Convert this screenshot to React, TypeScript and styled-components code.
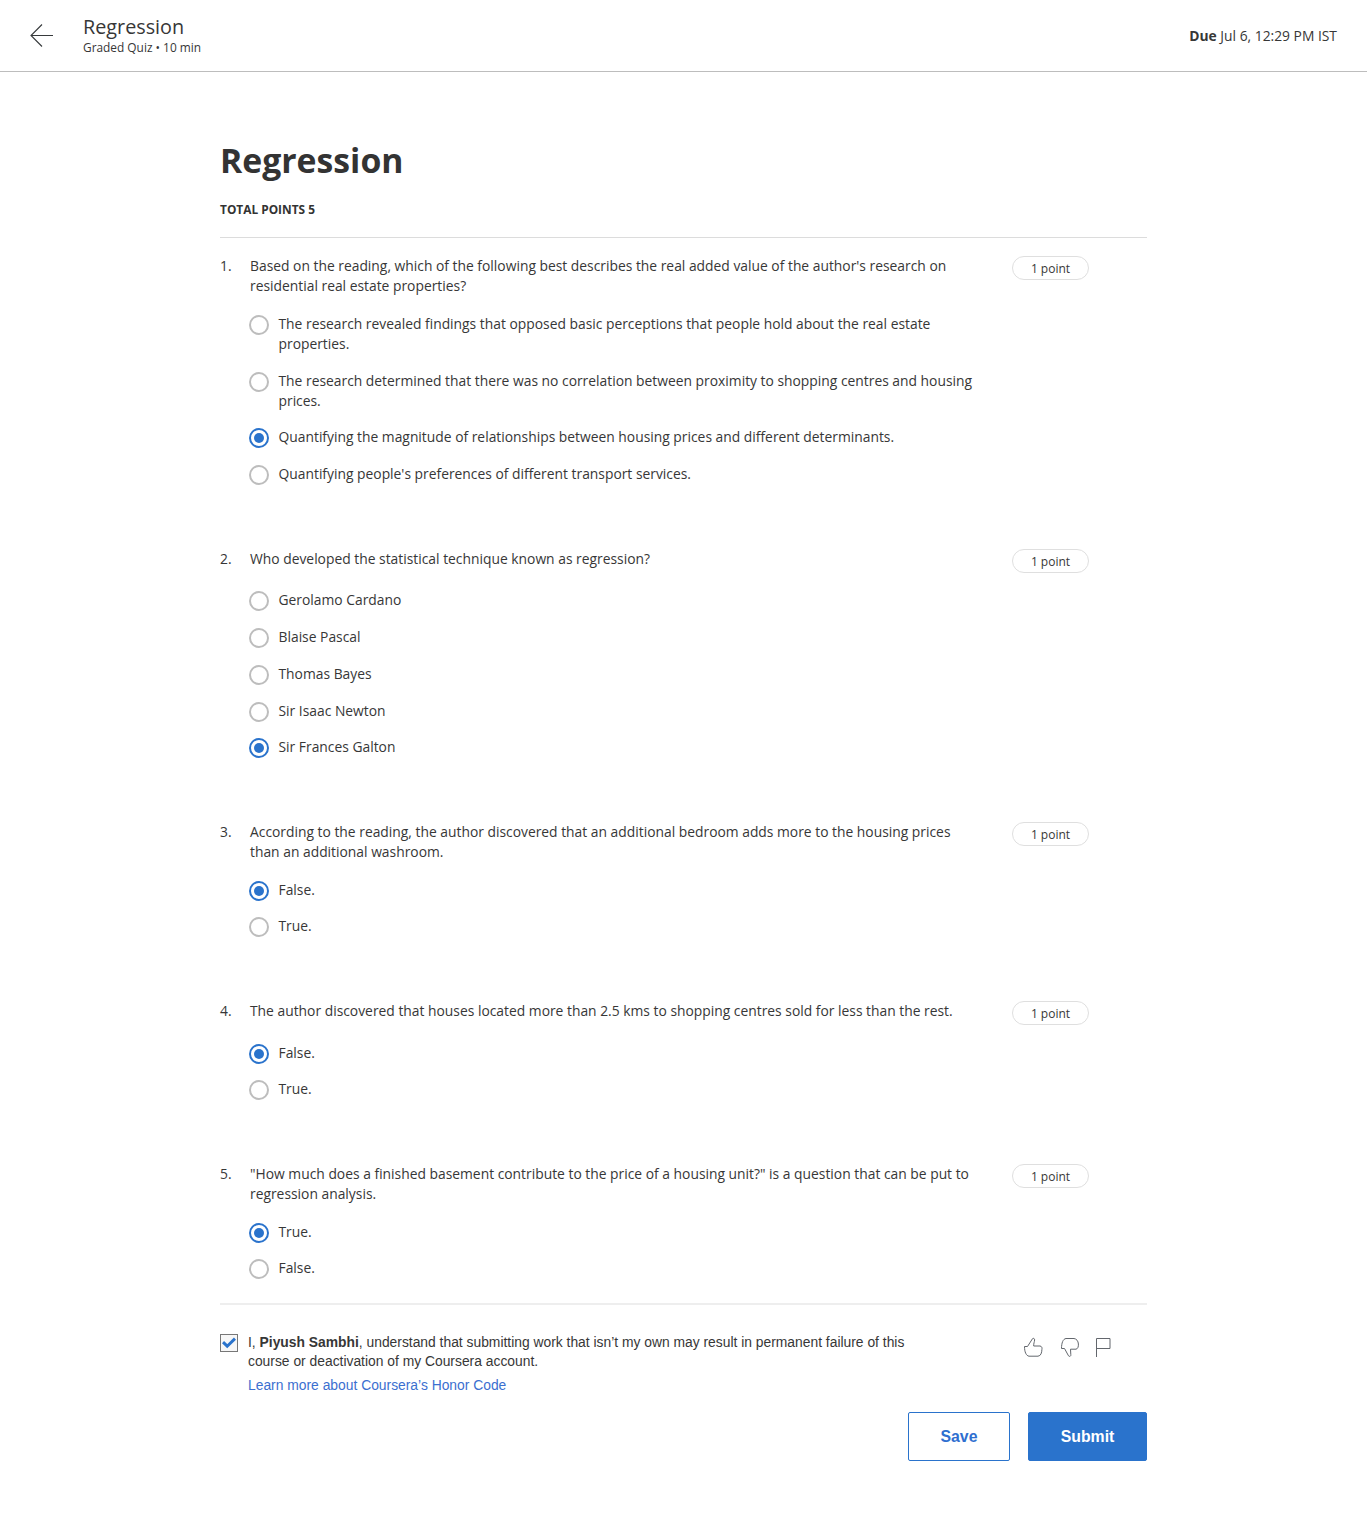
import React, { useState } from "react";
import styled, { createGlobalStyle } from "styled-components";

const GlobalStyle = createGlobalStyle`
  * { box-sizing: border-box; }
  body {
    margin: 0;
    background: #fff;
    color: #373737;
    font-family: "Open Sans", "Liberation Sans", sans-serif;
    font-size: 13.858px;
    line-height: 20px;
  }
`;

const Page = styled.div`
  min-height: 1523px;
`;

const TopBar = styled.header`
  display: flex;
  align-items: center;
  height: 72px;
  padding: 0 30px;
  border-bottom: 1px solid #bdbdbd;
`;

const BackIcon = styled.svg`
  width: 24px;
  height: 24px;
  margin: 0 29px 1px 0;
  fill: none;
  stroke: #373a3c;
  stroke-width: 1.1;
`;

const Heading = styled.div`
  flex: 1;
`;

const BarTitle = styled.div`
  font-size: 19.8px;
  line-height: 24px;
`;

const BarMeta = styled.div`
  margin-top: -1px;
  padding-bottom: 1px;
  font-size: 11.88px;
  line-height: 18px;
`;

const Due = styled.div`
  font-size: 13.84px;
`;

const Main = styled.main`
  width: 927px;
  margin: 0 0 0 220px;
  padding-top: 63px;
`;

const Title = styled.h1`
  margin: 0;
  font-size: 33.75px;
  line-height: 50px;
  font-weight: 700;
  color: #333;
`;

const Total = styled.div`
  margin-top: 14px;
  padding-bottom: 18px;
  border-bottom: 1px solid #dcdcdc;
  font-size: 11.88px;
  line-height: 20px;
  font-weight: 700;
  color: #333;
`;

const Questions = styled.section`
  display: flex;
  flex-direction: column;
  gap: 64.45px;
  padding: 18.05px 0 24.3px;
  border-bottom: 2px solid #eee;
`;

const Question = styled.article`
  display: flex;
  flex-direction: column;
  gap: 17.95px;
`;

const QuestionHead = styled.div`
  display: grid;
  grid-template-columns: 30px 728px 77px;
  align-items: start;
  min-height: 23.9px;
`;

const Pill = styled.div`
  margin: 0 0 -4px 34px;
  width: 77px;
  height: 24px;
  border: 1px solid #dfdfdf;
  border-radius: 12px;
  font-size: 12px;
  line-height: 23px;
  text-align: center;
`;

const Options = styled.div`
  display: flex;
  flex-direction: column;
  gap: 16.72px;
  width: 760px;
  padding-left: 29px;
`;

const Option = styled.label`
  display: flex;
  align-items: flex-start;
  cursor: pointer;
`;

const Radio = styled.span<{ $on: boolean }>`
  display: flex;
  align-items: center;
  justify-content: center;
  flex: none;
  width: 20px;
  height: 20px;
  margin: 1px 9.5px -1px 0;
  border: 2px solid ${(p) => (p.$on ? "#2a73cc" : "#bdbdbd")};
  border-radius: 50%;
  &::after {
    content: "";
    width: 10px;
    height: 10px;
    border-radius: 50%;
    background: ${(p) => (p.$on ? "#2a73cc" : "transparent")};
  }
`;

const HiddenInput = styled.input`
  appearance: none;
  width: 0;
  height: 0;
  margin: 0;
`;

const Footer = styled.footer`
  font-family: "Liberation Sans", Arial, sans-serif;
`;

const Honor = styled.div`
  display: flex;
  align-items: flex-start;
  padding-top: 28px;
`;

const Check = styled.button`
  display: flex;
  align-items: center;
  justify-content: center;
  width: 18px;
  height: 18px;
  margin: 1px 10px 0 0;
  padding: 0;
  border: 1px solid #777;
  background: #f7f7f7;
`;

const HonorText = styled.div`
  width: 680px;
  font-size: 13.855px;
  line-height: 19.4px;
`;

const HonorLink = styled.a`
  display: block;
  margin-top: 4px;
  color: #3b6fd0;
  text-decoration: none;
`;

const Feedback = styled.div`
  display: flex;
  margin-left: 95px;
  padding-top: 4px;
  gap: 17px;
`;

const FeedbackIcon = styled.svg<{ $w: number }>`
  width: ${(p) => p.$w}px;
  height: 21px;
  fill: none;
  stroke: #63676d;
  stroke-width: 1;
  stroke-linejoin: round;
`;

const FlagIcon = styled(FeedbackIcon)`
  margin-left: -2px;
`;

const Actions = styled.div`
  display: flex;
  justify-content: flex-end;
  gap: 18px;
  margin-top: 17px;
`;

const Button = styled.button<{ $primary?: boolean }>`
  width: ${(p) => (p.$primary ? 119 : 102)}px;
  height: 49px;
  padding: 1px 0 0;
  border: 1px solid #2a73cc;
  border-radius: 2px;
  background: ${(p) => (p.$primary ? "#2a73cc" : "#fff")};
  color: ${(p) => (p.$primary ? "#fff" : "#2f6fd0")};
  font: 700 15.82px/24px "Liberation Sans", Arial, sans-serif;
`;

type QuizItem = { prompt: string; options: string[]; answer: number };

const items: QuizItem[] = [
  {
    prompt:
      "Based on the reading, which of the following best describes the real added value of the author's research on residential real estate properties?",
    options: [
      "The research revealed findings that opposed basic perceptions that people hold about the real estate properties.",
      "The research determined that there was no correlation between proximity to shopping centres and housing prices.",
      "Quantifying the magnitude of relationships between housing prices and different determinants.",
      "Quantifying people's preferences of different transport services.",
    ],
    answer: 2,
  },
  {
    prompt: "Who developed the statistical technique known as regression?",
    options: ["Gerolamo Cardano", "Blaise Pascal", "Thomas Bayes", "Sir Isaac Newton", "Sir Frances Galton"],
    answer: 4,
  },
  {
    prompt:
      "According to the reading, the author discovered that an additional bedroom adds more to the housing prices than an additional washroom.",
    options: ["False.", "True."],
    answer: 0,
  },
  {
    prompt: "The author discovered that houses located more than 2.5 kms to shopping centres sold for less than the rest.",
    options: ["False.", "True."],
    answer: 0,
  },
  {
    prompt:
      '"How much does a finished basement contribute to the price of a housing unit?" is a question that can be put to regression analysis.',
    options: ["True.", "False."],
    answer: 0,
  },
];

function QuizQuestion({ item, index }: { item: QuizItem; index: number }) {
  const [picked, setPicked] = useState(item.answer);
  return (
    <Question>
      <QuestionHead>
        <span>{index + 1}.</span>
        <span>{item.prompt}</span>
        <Pill>1 point</Pill>
      </QuestionHead>
      <Options>
        {item.options.map((text, i) => (
          <Option key={text}>
            <HiddenInput type="radio" name={`q${index}`} checked={picked === i} onChange={() => setPicked(i)} />
            <Radio $on={picked === i} />
            <span>{text}</span>
          </Option>
        ))}
      </Options>
    </Question>
  );
}

export default function App() {
  const [agreed, setAgreed] = useState(true);
  return (
    <Page>
      <GlobalStyle />
      <TopBar>
        <BackIcon viewBox="0 0 24 24">
          <path d="M23 12.5H1M12 1.5L1 12.5L12 23.5" />
        </BackIcon>
        <Heading>
          <BarTitle>Regression</BarTitle>
          <BarMeta>Graded Quiz • 10 min</BarMeta>
        </Heading>
        <Due>
          <b>Due</b> Jul 6, 12:29 PM IST
        </Due>
      </TopBar>
      <Main>
        <Title>Regression</Title>
        <Total>TOTAL POINTS 5</Total>
        <Questions>
          {items.map((item, i) => (
            <QuizQuestion key={item.prompt} item={item} index={i} />
          ))}
        </Questions>
        <Footer>
          <Honor>
            <Check type="button" role="checkbox" aria-checked={agreed} onClick={() => setAgreed(!agreed)}>
              {agreed && (
                <svg width="14" height="12" viewBox="0 0 14 12" fill="none" stroke="#2a73cc" strokeWidth="3">
                  <path d="M1 5.2L5.2 9.2L13 1.6" />
                </svg>
              )}
            </Check>
            <HonorText>
              I, <b>Piyush Sambhi</b>, understand that submitting work that isn’t my own may result in permanent failure
              of this course or deactivation of my Coursera account.
              <HonorLink>Learn more about Coursera’s Honor Code</HonorLink>
            </HonorText>
            <Feedback>
              <FeedbackIcon $w={20} viewBox="0 0 20 21">
                <path d="M1.5 9.5H4.5L9.5 1.7C10.6 .8 11.8 1.7 11.6 3C11.5 5 10.5 6.5 10.7 9H17C18.8 9.3 19.3 10.8 18.9 12.5C18.8 15.5 18 18.9 15 19.2H6C3.2 18.8 1.5 15 1.5 9.5Z" />
              </FeedbackIcon>
              <FeedbackIcon $w={20} viewBox="0 0 20 21">
                <path d="M1.5 11.5H4.5L8.5 18.8C9.5 20 11.2 19.2 10.8 17.5L10.5 12.2H16C18 11.7 18.5 9.5 18.4 7C18.2 4 16.5 1.8 14 1.5H6C3 1.9 1.5 6 1.5 11.5Z" />
              </FeedbackIcon>
              <FlagIcon $w={16} viewBox="0 0 16 21">
                <path d="M1.5 20V1.5H15V11.5H1.5" />
              </FlagIcon>
            </Feedback>
          </Honor>
          <Actions>
            <Button>Save</Button>
            <Button $primary>Submit</Button>
          </Actions>
        </Footer>
      </Main>
    </Page>
  );
}
